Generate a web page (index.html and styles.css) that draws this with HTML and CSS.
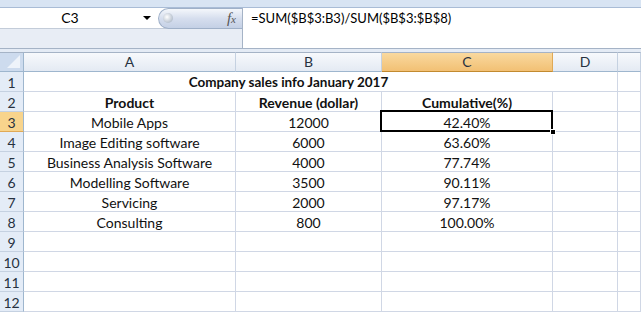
FILE: index.html
```html
<!DOCTYPE html>
<html lang="en">
<head>
    <meta charset="UTF-8">
    <title>Company sales info</title>
    <link rel="stylesheet" href="styles.css">
</head>
<body>
    <div class="topbar"></div>
    <div class="formula-row">
        <div class="left-part">
            <div class="name-row">
                <div class="name-box">C3</div>
                <div class="name-arrow"></div>
                <div class="pill">
                    <span class="knob"></span>
                    <span class="fx">f<small>x</small></span>
                </div>
            </div>
            <div class="name-under"></div>
        </div>
        <div class="formula-box">=SUM($B$3:B3)/SUM($B$3:$B$8)</div>
    </div>
    <div class="band"></div>

    <div class="sheet">
        <div class="corner"><span class="tri"></span></div>
        <div class="col-head">A</div>
        <div class="col-head">B</div>
        <div class="col-head active">C</div>
        <div class="col-head">D</div>
        <div class="col-head"></div>

        <div class="row-head">1</div>
        <div class="cell title">Company sales info January 2017</div>
        <div class="cell"></div>
        <div class="cell"></div>

        <div class="row-head">2</div>
        <div class="cell bold">Product</div>
        <div class="cell bold">Revenue (dollar)</div>
        <div class="cell bold">Cumulative(%)</div>
        <div class="cell"></div>
        <div class="cell"></div>

        <div class="row-head active">3</div>
        <div class="cell">Mobile Apps</div>
        <div class="cell">12000</div>
        <div class="cell selected">42.40%<span class="handle"></span></div>
        <div class="cell"></div>
        <div class="cell"></div>

        <div class="row-head">4</div>
        <div class="cell">Image Editing software</div>
        <div class="cell">6000</div>
        <div class="cell">63.60%</div>
        <div class="cell"></div>
        <div class="cell"></div>

        <div class="row-head">5</div>
        <div class="cell">Business Analysis Software</div>
        <div class="cell">4000</div>
        <div class="cell">77.74%</div>
        <div class="cell"></div>
        <div class="cell"></div>

        <div class="row-head">6</div>
        <div class="cell">Modelling Software</div>
        <div class="cell">3500</div>
        <div class="cell">90.11%</div>
        <div class="cell"></div>
        <div class="cell"></div>

        <div class="row-head">7</div>
        <div class="cell">Servicing</div>
        <div class="cell">2000</div>
        <div class="cell">97.17%</div>
        <div class="cell"></div>
        <div class="cell"></div>

        <div class="row-head">8</div>
        <div class="cell">Consulting</div>
        <div class="cell">800</div>
        <div class="cell">100.00%</div>
        <div class="cell"></div>
        <div class="cell"></div>

        <div class="row-head">9</div>
        <div class="cell"></div><div class="cell"></div><div class="cell"></div><div class="cell"></div><div class="cell"></div>
        <div class="row-head">10</div>
        <div class="cell"></div><div class="cell"></div><div class="cell"></div><div class="cell"></div><div class="cell"></div>
        <div class="row-head">11</div>
        <div class="cell"></div><div class="cell"></div><div class="cell"></div><div class="cell"></div><div class="cell"></div>
        <div class="row-head">12</div>
        <div class="cell"></div><div class="cell"></div><div class="cell"></div><div class="cell"></div><div class="cell"></div>
    </div>
</body>
</html>
```

FILE: styles.css
```css
* {
    box-sizing: border-box;
}
body {
    margin: 0;
    width: 641px;
    height: 314px;
    overflow: hidden;
    background: #ffffff;
    font-family: Lato, "Liberation Sans", sans-serif;
    font-size: 14px;
    color: #000;
}
.topbar {
    height: 8px;
    background: #d8e4f3;
    border-bottom: 1px solid #a9bcd6;
}
.formula-row {
    display: flex;
    height: 41px;
    border-bottom: 1px solid #a5b3c6;
}
.left-part {
    width: 242px;
    display: flex;
    flex-direction: column;
}
.name-row {
    display: flex;
    height: 21px;
    background: #ffffff;
    border-bottom: 1px solid #c3ccd9;
}
.name-box {
    width: 140px;
    text-align: center;
    line-height: 20px;
    font-size: 14px;
}
.name-arrow {
    width: 18px;
    position: relative;
}
.name-arrow::after {
    content: "";
    position: absolute;
    left: 3px;
    top: 8px;
    border-left: 4px solid transparent;
    border-right: 4px solid transparent;
    border-top: 4px solid #000;
}
.pill {
    flex: 1;
    position: relative;
    height: 21px;
    border-radius: 11px 0 0 11px;
    border: 1px solid #9fb0c8;
    border-right: none;
    background: linear-gradient(#f4f7fb, #d6deee 50%, #c4d0e5);
}
.knob {
    position: absolute;
    left: 4px;
    top: 4px;
    width: 10px;
    height: 10px;
    border-radius: 50%;
    background: radial-gradient(circle at 40% 40%, #ffffff, #b8c2cf 70%, #9aa6b5);
}
.fx {
    position: absolute;
    right: 6px;
    top: 1px;
    font-family: "Liberation Serif", serif;
    font-style: italic;
    font-size: 15px;
    line-height: 17px;
    color: #555;
}
.fx small {
    font-size: 11px;
}
.name-under {
    flex: 1;
    background: #e8edf5;
}
.formula-box {
    flex: 1;
    background: #ffffff;
    border-left: 1px solid #a5b3c6;
    padding: 1px 0 0 8px;
    font-size: 13px;
    line-height: 18px;
}
.band {
    height: 3px;
    background: #e4ebf5;
}
.sheet {
    display: grid;
    grid-template-columns: 24px 212px 146px 171px 65px 23px;
    grid-auto-rows: 20px;
}
.corner {
    position: relative;
    background: #cddbee;
    border-right: 1px solid #9eb6ce;
    border-bottom: 1px solid #9eb6ce;
    border-top: 1px solid #a5b3c6;
}
.tri {
    position: absolute;
    right: 3px;
    bottom: 3px;
    border-left: 13px solid transparent;
    border-bottom: 13px solid #eef3fa;
}
.col-head {
    text-align: center;
    line-height: 18px;
    color: #27313f;
    font-size: 14px;
    background: linear-gradient(#f7f9fc, #e4eaf3);
    border-top: 1px solid #a5b3c6;
    border-right: 1px solid #c5d1e1;
    border-bottom: 1px solid #9eb6ce;
}
.col-head.active {
    background: linear-gradient(#f9d99f, #f2c074);
    border-right-color: #e0a956;
    border-bottom-color: #c28a30;
}
.row-head {
    text-align: center;
    padding-top: 1px;
    line-height: 19px;
    color: #27313f;
    font-size: 14px;
    background: #e4ecf7;
    border-right: 1px solid #9eb6ce;
    border-bottom: 1px solid #c5d1e1;
}
.row-head.active {
    background: #f8d48c;
    border-bottom-color: #e0a956;
}
.cell {
    text-align: center;
    padding-top: 1px;
    line-height: 19px;
    white-space: nowrap;
    border-right: 1px solid #d0d7e5;
    border-bottom: 1px solid #d0d7e5;
    color: #111;
}
.title {
    grid-column: span 3;
    font-weight: bold;
    font-size: 13.5px;
    border-right: none;
}
.bold {
    font-weight: bold;
}
.selected {
    position: relative;
}
.selected::before {
    content: "";
    position: absolute;
    left: -2px;
    top: -2px;
    right: -1px;
    bottom: -1px;
    border: 2px solid #000;
}
.handle {
    position: absolute;
    right: -4px;
    bottom: -4px;
    width: 6px;
    height: 6px;
    background: #000;
    border: 1px solid #fff;
}
```
